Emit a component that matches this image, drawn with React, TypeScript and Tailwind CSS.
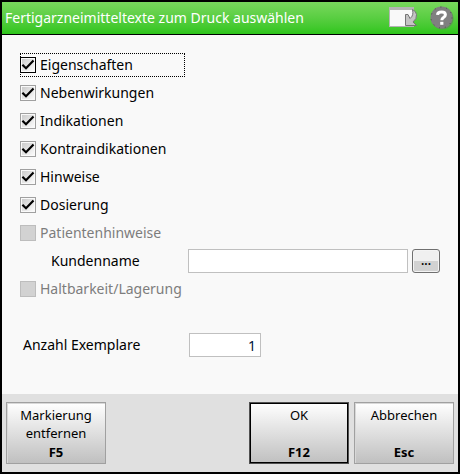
import { useState } from "react";

const topics = [
  { name: "Eigenschaften", focused: true },
  { name: "Nebenwirkungen" },
  { name: "Indikationen" },
  { name: "Kontraindikationen" },
  { name: "Hinweise" },
  { name: "Dosierung" },
];

function Check({ name, focused, disabled }: { name: string; focused?: boolean; disabled?: boolean }) {
  const [checked, setChecked] = useState(!disabled);
  return (
    <div className="flex h-7 items-center">
      <label className={`flex h-6 items-center gap-1 ${focused ? "w-[165px] outline-1 -outline-offset-1 outline-dotted outline-black" : ""} ${disabled ? "text-[#7d7d7d]" : "text-black"}`}>
        <span className="relative flex size-4">
          <input
            type="checkbox"
            checked={checked}
            disabled={disabled}
            onChange={() => setChecked((v) => !v)}
            className={`size-4 appearance-none border ${focused ? "border-black" : disabled ? "border-[#bdbdbd]" : "border-[#a0a0a0]"} ${disabled ? "bg-[#d2d2d2]" : "bg-linear-to-br from-[#c8c8c8] to-white shadow-[inset_0_0_0_1px_#fafafa]"}`}
          />
          {checked && (
            <svg viewBox="0 0 16 16" className="pointer-events-none absolute inset-0 size-4" fill="none" stroke="#000" strokeWidth="2.2">
              <path d="M2.4 7.800 6 11.200 13.500 3.600" />
            </svg>
          )}
        </span>
        {name}
      </label>
    </div>
  );
}

function ActionButton({ label, hotkey, primary }: { label: string; hotkey: string; primary?: boolean }) {
  return (
    <button
      className={`flex h-[62px] w-[100px] flex-col items-center justify-between border bg-linear-to-b from-white to-[#c0c0c0] px-2 pt-[3px] pb-0.5 text-[13px] leading-[18px] text-black ${primary ? "border-[#505050] shadow-[inset_0_0_0_1px_#000]" : "border-[#a0a0a0] shadow-[inset_1px_1px_0_#d8d8d8]"}`}
    >
      <span>{label}</span>
      <b>{hotkey}</b>
    </button>
  );
}

export default function App() {
  return (
    <div className="flex min-h-screen flex-col border-2 border-black bg-[#f9f9f9] font-['Noto_Sans',sans-serif] text-sm text-black">
      <header className="flex h-[33px] items-center border-b border-black bg-linear-to-b from-[#78d75c] to-[#2dc51a] pr-1 pl-[3px] text-white">
        <h1 className="flex-1 whitespace-nowrap">Fertigarzneimitteltexte zum Druck auswählen</h1>
        <button aria-label="Andocken" className="mr-3">
          <svg width="30" height="22" viewBox="0 0 30 22">
            <path d="M1 0h25v20H1z" fill="#b4b4b4" />
            <path d="M2 3h23v16H2z" fill="#f9f9f9" />
            <path d="M17.500 7.500v11H28.500l-3.500-3.500q4-3 3.500-7.500-.5-3.500-4-5 1.500 6-2.500 9l-2-4z" fill="#c4c4c4" stroke="#757575" strokeLinejoin="round" />
          </svg>
        </button>
        <button aria-label="Hilfe">
          <svg width="24" height="24" viewBox="0 0 24 24">
            <circle cx="12.500" cy="12.500" r="11" fill="#5a9a50" />
            <circle cx="11.500" cy="11.500" r="11" fill="#808080" />
            <circle cx="11.500" cy="11.500" r="10.500" fill="none" stroke="#4a4a4a" strokeDasharray="1 5" />
            <path d="M7.500 8.800q.2-2.800 4.200-2.800 3.700 0 3.700 2.800 0 1.600-1.900 2.700-1.700 1-1.700 2.700" fill="none" stroke="#fff" strokeWidth="3" />
            <path d="M10.200 15.800h3.200v3h-3.200z" fill="#fff" />
          </svg>
        </button>
      </header>

      <main className="flex-1 px-[18px] pt-4">
        {topics.map((t) => (
          <Check key={t.name} name={t.name} focused={t.focused} />
        ))}
        <Check name="Patientenhinweise" disabled />
        <div className="flex h-7 items-center">
          <label htmlFor="customer" className="w-[168px] shrink-0 pl-[31px]">Kundenname</label>
          <input id="customer" className="h-6 min-w-0 flex-1 border border-[#c0c0c0] bg-white px-1" />
          <button
            aria-label="Kunde suchen"
            className="ml-1 h-6 w-7 rounded-[3px] border border-[#707070] bg-linear-to-b from-[#f0f0f0] from-50% to-[#d2d2d2] to-50% text-xs font-semibold shadow-[inset_0_0_0_1px_#f4f4f4]"
          >
            ...
          </button>
        </div>
        <Check name="Haltbarkeit/Lagerung" disabled />
        <div className="mt-7 flex h-7 items-center">
          <label htmlFor="copies" className="w-[169px] shrink-0 pl-[3px]">Anzahl Exemplare</label>
          <input id="copies" defaultValue="1" className="h-6 w-[72px] border border-[#c0c0c0] bg-white px-1 text-right text-[#00143c]" />
        </div>
      </main>

      <footer className="flex gap-[5px] bg-[#e0e0e0] px-1 py-2">
        <ActionButton label="Markierung entfernen" hotkey="F5" />
        <div className="flex-1" />
        <ActionButton label="OK" hotkey="F12" primary />
        <ActionButton label="Abbrechen" hotkey="Esc" />
      </footer>
    </div>
  );
}
